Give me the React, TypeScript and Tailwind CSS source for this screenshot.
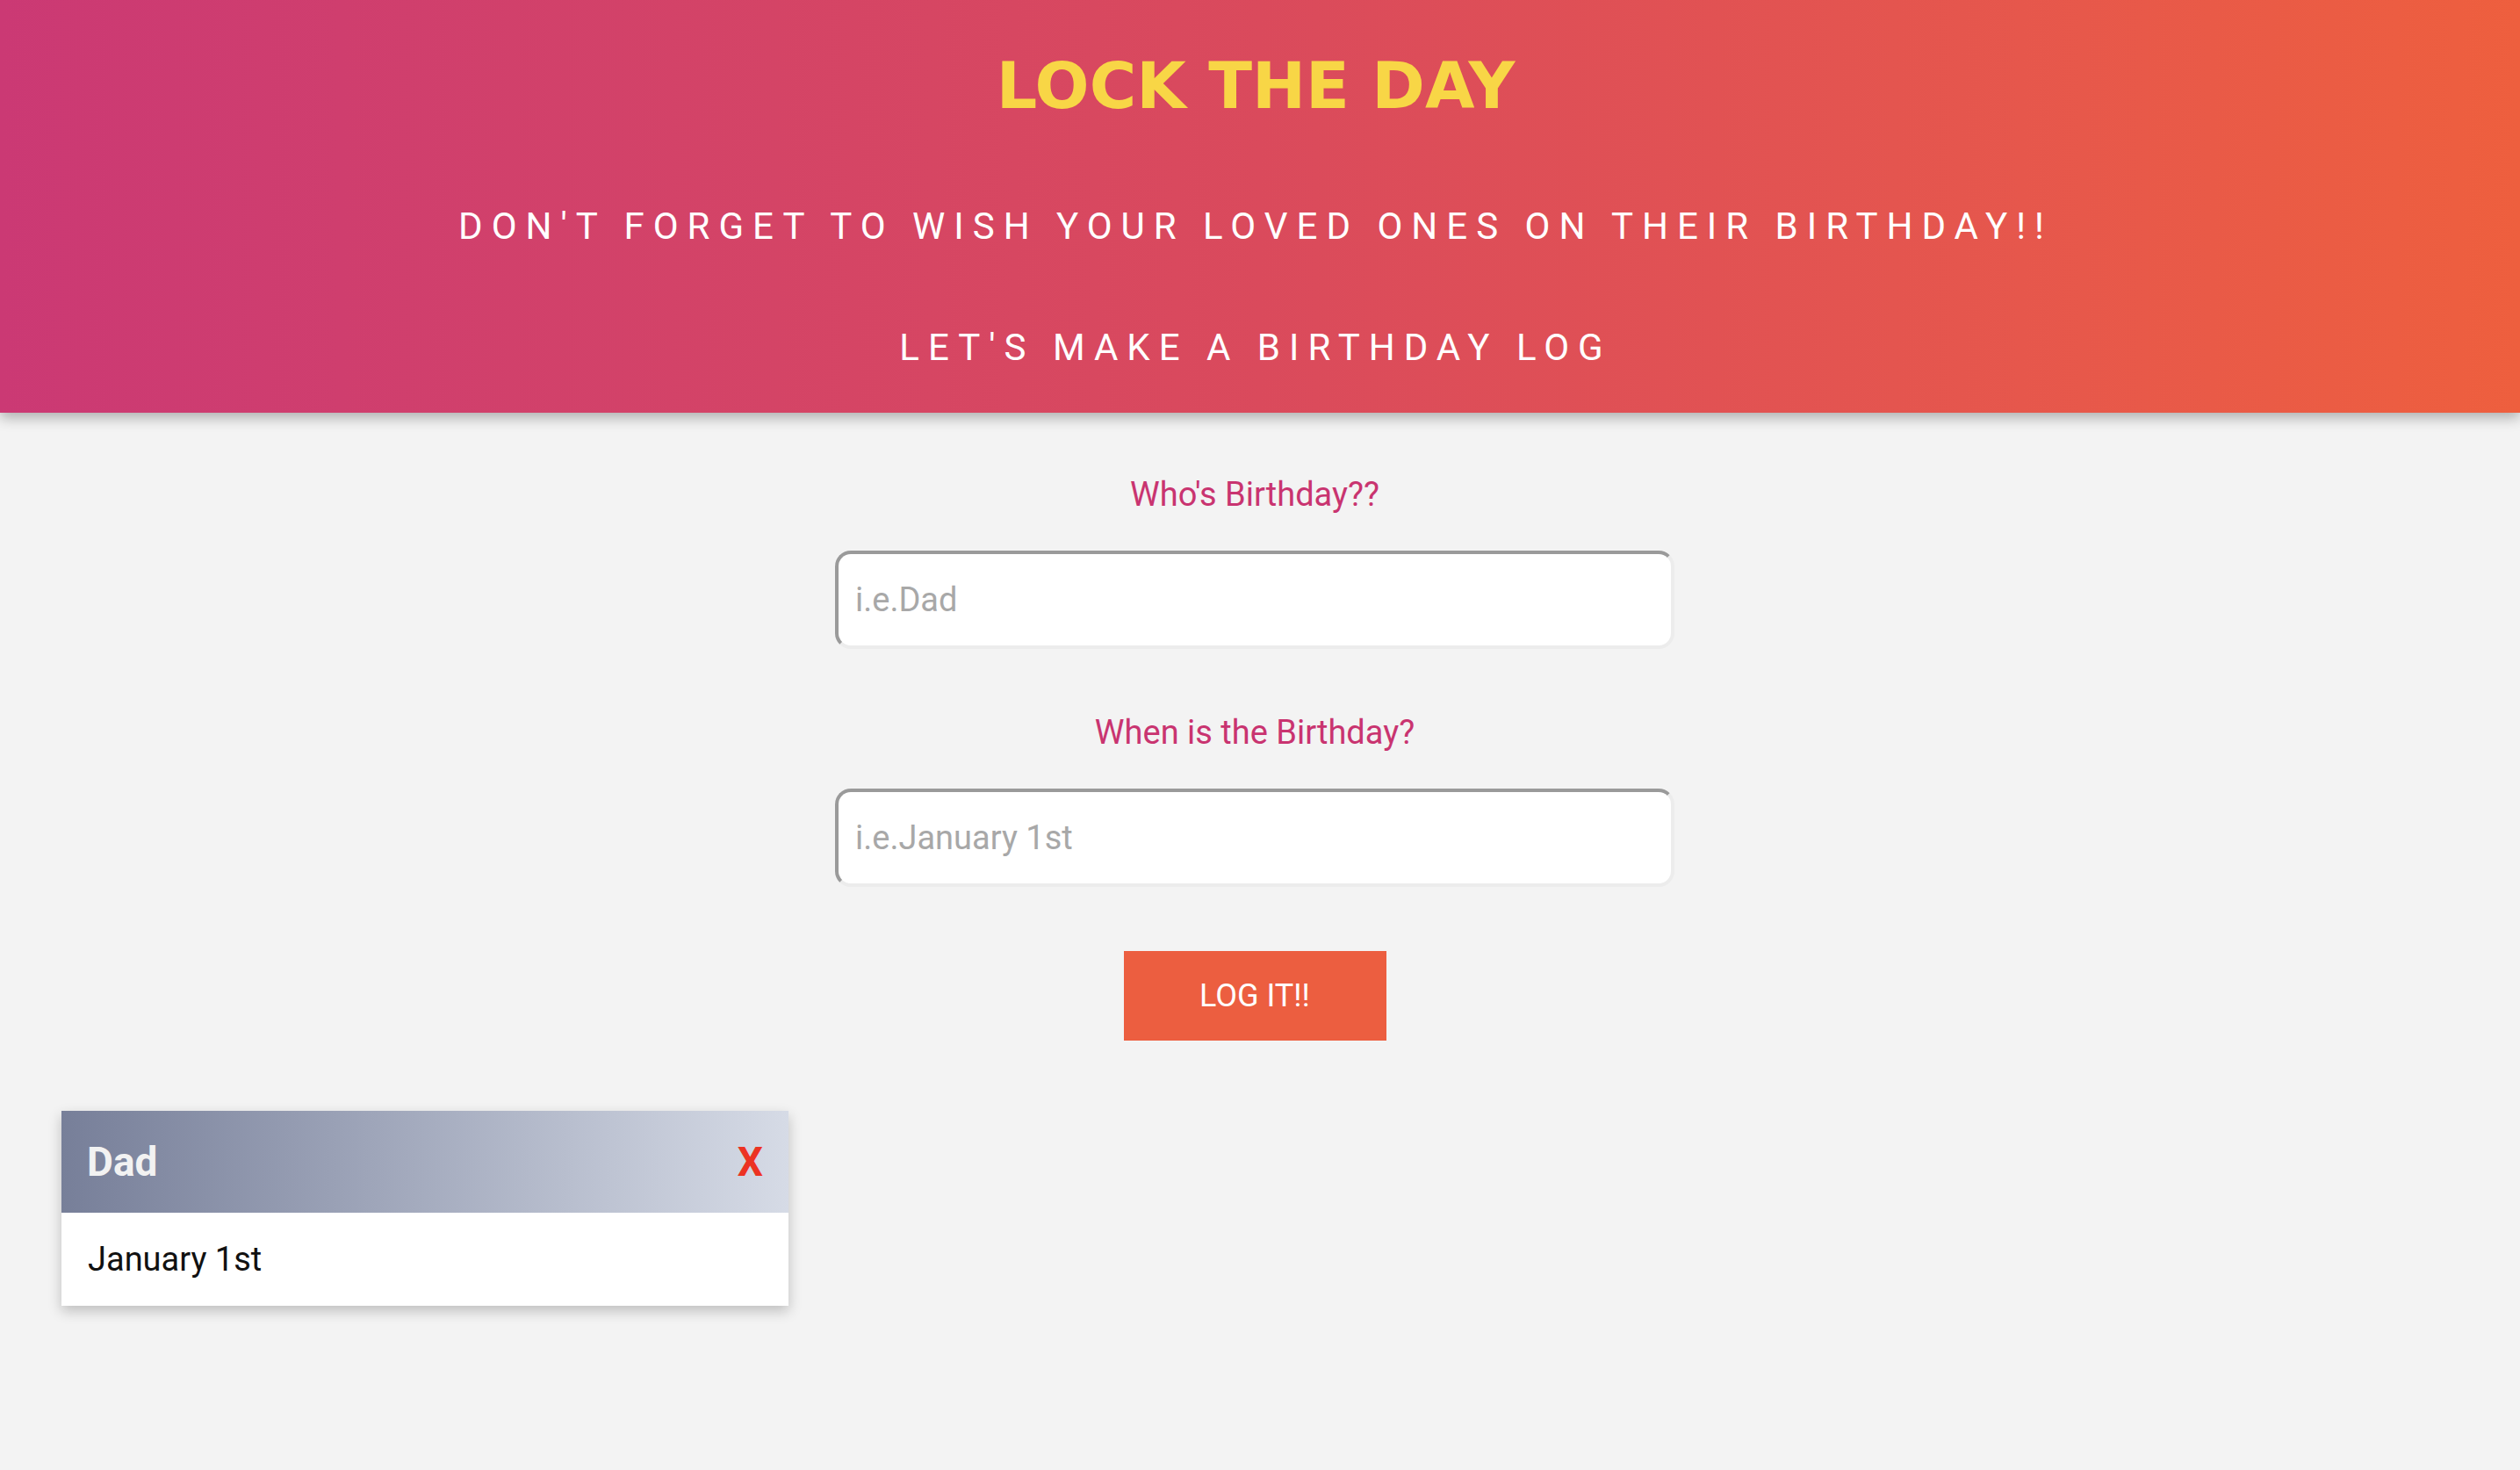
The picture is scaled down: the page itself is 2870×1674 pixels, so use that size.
import { useState } from 'react'

// ── Types ─────────────────────────────────────────────────────────────────────

type Birthday = {
  id: number
  name: string
  date: string
}

const INITIAL: Birthday[] = [{ id: 1, name: 'Dad', date: 'January 1st' }]

// ── Header banner ─────────────────────────────────────────────────────────────

function Banner() {
  return (
    <header className="relative z-10 flex flex-col items-center bg-gradient-to-r from-[#cb3974] via-[#da4a5c] to-[#ee5f3e] pt-[61px] pb-[53px] pr-[10px] shadow-[0_6px_14px_rgba(0,0,0,0.28)]">
      <h1 className="font-['DejaVu_Sans',sans-serif] text-[73px] font-bold leading-[74px] text-[#f8d646]">
        LOCK THE DAY
      </h1>
      <p className="mt-[102px] font-['Roboto',sans-serif] text-[42px] leading-[42px] tracking-[10px] text-white">
        DON'T FORGET TO WISH YOUR LOVED ONES ON THEIR BIRTHDAY!!
      </p>
      <p className="mt-[96px] font-['Roboto',sans-serif] text-[42px] leading-[42px] tracking-[10px] text-white">
        LET'S MAKE A BIRTHDAY LOG
      </p>
    </header>
  )
}

// ── Form field ────────────────────────────────────────────────────────────────

function Field({
  label,
  placeholder,
  value,
  onChange,
}: {
  label: string
  placeholder: string
  value: string
  onChange: (v: string) => void
}) {
  return (
    <div className="flex w-full flex-col items-center">
      <label className="text-[38px] leading-[38px] text-[#c93470]">{label}</label>
      <input
        value={value}
        onChange={(e) => onChange(e.target.value)}
        placeholder={placeholder}
        className="mt-[45px] h-[112px] w-[956px] rounded-[18px] border-[4px] border-t-[#9a9a9a] border-l-[#9a9a9a] border-r-[#ececec] border-b-[#ececec] bg-white px-[19px] text-[38px] text-[#222] outline-none placeholder:text-[#a8a8a8]"
      />
    </div>
  )
}

// ── Birthday card ─────────────────────────────────────────────────────────────

function BirthdayCard({ item, onRemove }: { item: Birthday; onRemove: () => void }) {
  return (
    <div className="w-[828px] bg-white shadow-[0_6px_14px_rgba(0,0,0,0.22)]">
      <div className="flex h-[116px] items-center justify-between bg-gradient-to-r from-[#777f99] to-[#d6dbe6] pl-[29px] pr-[29px]">
        <span className="text-[46px] font-bold text-[#f2f2f2]">{item.name}</span>
        <button onClick={onRemove} className="text-[46px] font-bold text-[#ec3323]">
          X
        </button>
      </div>
      <div className="flex h-[106px] items-center pl-[30px] text-[38px] text-[#111]">
        {item.date}
      </div>
    </div>
  )
}

// ── App ───────────────────────────────────────────────────────────────────────

export default function App() {
  const [items, setItems] = useState<Birthday[]>(INITIAL)
  const [name, setName] = useState('')
  const [date, setDate] = useState('')

  const logIt = () => {
    if (!name.trim() || !date.trim()) return
    setItems([...items, { id: Date.now(), name, date }])
    setName('')
    setDate('')
  }

  return (
    <div className="min-h-screen bg-[#f3f3f3] font-['Roboto',sans-serif]">
      <Banner />

      <main className="flex flex-col items-center pt-[74px] pr-[12px]">
        <Field label="Who's Birthday??" placeholder="i.e.Dad" value={name} onChange={setName} />
        <div className="mt-[76px] w-full">
          <Field
            label="When is the Birthday?"
            placeholder="i.e.January 1st"
            value={date}
            onChange={setDate}
          />
        </div>
        <button
          onClick={logIt}
          className="mt-[73px] h-[102px] w-[299px] bg-[#ec5e40] text-[36px] text-white"
        >
          LOG IT!!
        </button>
      </main>

      {/* ── Logged birthdays ─────────────────────────────────────────────── */}
      <section className="flex flex-wrap gap-[40px] px-[70px] pt-[80px] pb-[80px]">
        {items.map((b) => (
          <BirthdayCard
            key={b.id}
            item={b}
            onRemove={() => setItems(items.filter((i) => i.id !== b.id))}
          />
        ))}
      </section>
    </div>
  )
}
